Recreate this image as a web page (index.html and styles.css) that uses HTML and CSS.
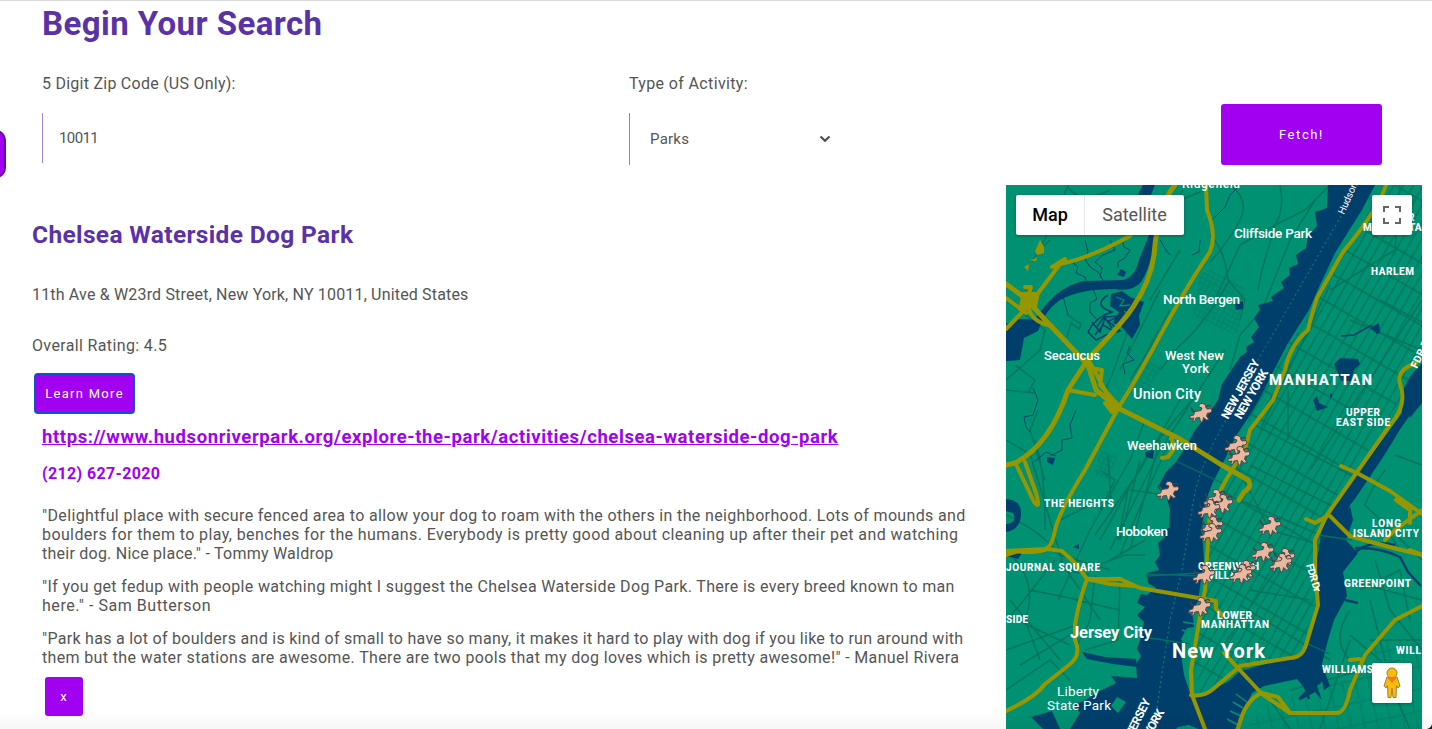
FILE: index.html
```html
<!DOCTYPE html>
<html lang="en">
<head>
<meta charset="utf-8">
<title>Begin Your Search</title>
<link rel="stylesheet" href="styles.css">
</head>
<body>
<div class="side-tab"></div>
<main class="page">
  <h1 class="title"><span>Begin Your Search</span></h1>
  <form class="search">
    <div class="field">
      <label class="label" for="zip"><span class="t-zip">5 Digit Zip Code (US Only):</span></label>
      <input class="zip" id="zip" value="10011">
    </div>
    <div class="field field-activity">
      <label class="label"><span class="t-type">Type of Activity:</span></label>
      <div class="select"><span>Parks</span>
        <svg width="12" height="8" viewBox="0 0 12 8"><path d="M1.5 1.5 6 5.8 10.5 1.5" fill="none" stroke="#4a4a4a" stroke-width="2"/></svg>
      </div>
    </div>
    <button class="btn fetch" type="button">Fetch!</button>
  </form>
  <div class="results">
    <section class="place">
      <h2 class="name"><span>Chelsea Waterside Dog Park</span></h2>
      <p class="line"><span class="t-addr">11th Ave &amp; W23rd Street, New York, NY 10011, United States</span></p>
      <p class="line"><span class="t-rate">Overall Rating: 4.5</span></p>
      <button class="btn more" type="button">Learn More</button>
      <div class="details">
        <a class="link" href="#">https://www.hudsonriverpark.org/explore-the-park/activities/chelsea-waterside-dog-park</a>
        <div class="phone">(212) 627-2020</div>
        <p class="review"><span class="r1">"Delightful place with secure fenced area to allow your dog to roam with the others in the neighborhood. Lots of mounds and</span><br><span class="r2">boulders for them to play, benches for the humans. Everybody is pretty good about cleaning up after their pet and watching</span><br><span class="r3">their dog. Nice place." - Tommy Waldrop</span></p>
        <p class="review"><span class="r4">"If you get fedup with people watching might I suggest the Chelsea Waterside Dog Park. There is every breed known to man</span><br><span class="r5">here." - Sam Butterson</span></p>
        <p class="review"><span class="r6">"Park has a lot of boulders and is kind of small to have so many, it makes it hard to play with dog if you like to run around with</span><br><span class="r7">them but the water stations are awesome. There are two pools that my dog loves which is pretty awesome!" - Manuel Rivera</span></p>
        <button class="btn close" type="button">x</button>
      </div>
    </section>
    <div class="map">
      <svg class="map-canvas" width="416" height="544" viewBox="1006 185 416 544">
        <defs>
          <pattern id="grid" width="8.6" height="27" patternUnits="userSpaceOnUse" patternTransform="rotate(30)">
            <path d="M1 0V27M0 3H8.6" stroke="#00755c" stroke-width="1.3" fill="none"/>
          </pattern>
          <pattern id="fine" width="5" height="5" patternUnits="userSpaceOnUse" patternTransform="rotate(28)">
            <path d="M1 0V5M0 1H5" stroke="#007a60" stroke-width=".6" fill="none"/>
          </pattern>
          <pattern id="loose" width="13" height="22" patternUnits="userSpaceOnUse" patternTransform="rotate(-12)">
            <path d="M1 0V22M0 1H13" stroke="#00775e" stroke-width="1" fill="none"/>
          </pattern>
          <g id="dog" stroke-linejoin="round" stroke-linecap="round">
            <path d="M-9.500-5Q-9-1-5-1" fill="none" stroke="#43404c" stroke-width="1.600"/>
            <path d="M-6-1.500 0-2.500 1-5-2-6Q-3-9 0-9.500 4-10 5-6L6-4 10-4.500 11-2 9 0 6.500 0 5.500 3 8 6.500 5.500 7 2.500 4.500 1.500 9-.5 9-1.500 4.500-5 5-6 8-8.500 8.500-7 5-11 5.500-11 3-7.500 2z" fill="#eab79f" stroke="#54454d" stroke-width="1"/>
            <path d="M5-6Q8-9 9.500-6.500" fill="none" stroke="#43404c" stroke-width="1.300"/>
          </g>
        </defs>
        <rect x="1006" y="185" width="416" height="544" fill="#009072"/>

        <!-- street grids -->
        <path d="M1384 185H1422V350L1400 400 1352 475 1326 510 1316 590 1306 640 1298 656 1240 672 1200 692 1192 650 1204 590 1212 520 1240 450 1262 370 1300 330 1330 280z" fill="url(#grid)"/>
        <path d="M1210 270 1245 288 1238 335 1192 318 1200 275z" fill="url(#fine)"/>
        <path d="M1143 362 1162 365 1145 400 1128 395z" fill="url(#fine)"/>
        <path d="M1100 450 1118 455 1108 480 1094 475z" fill="url(#fine)"/>
        <path d="M1345 680 1370 640 1422 640V729H1245L1270 700z" fill="url(#loose)" opacity=".8"/>
        <g fill="none" stroke="#00765c" stroke-width="1.500">
          <path d="M1068 185Q1052 230 1032 262M1006 300 1045 330 1040 350 1006 380M1006 390 1035 393M1015 365 1035 380 1028 393M1066 314 1081 324 1079 329 1071 323 1067 337"/>
          <path d="M1110 190Q1080 205 1068 187M1183 190 1150 250 1150 270 1110 380 1105 390M1180 300 1130 380M1160 290 1120 370M1170 310 1150 345M1180 250 1150 300"/>
          <path d="M1330 185 1305 210 1275 225 1262 270 1258 290M1315 200 1290 240 1262 310 1240 335 1230 370M1280 185Q1285 210 1275 225L1240 245 1215 300M1210 235Q1225 250 1228 280L1245 300 1240 320"/>
          <path d="M1205 190 1180 200M1230 185Q1250 200 1240 220T1210 262M1230 280Q1200 330 1180 345L1160 370M1225 350 1160 450 1110 550M1200 390 1150 450 1100 540M1180 400 1140 470 1095 535M1170 440 1130 530 1120 555"/>
          <path d="M1145 420 1130 460 1090 530 1058 600M1108 455 1111 500M1100 470 1115 480 1100 510M1130 490 1165 495M1128 490 1118 540M1140 460 1120 540M1160 440 1130 550"/>
          <path d="M1035 440Q1045 470 1045 530M1006 440 1030 454 1065 570 1090 575M1045 480 1030 430 1038 410M1090 505 1060 520M1006 515Q1040 530 1060 555L1110 570"/>
          <path d="M1006 550Q1040 580 1025 620L1040 660M1055 560 1020 605 1006 620M1030 590 1080 600M1006 650 1076 625M1006 615 1070 645M1020 665 1078 630M1010 600 1060 660M1060 560 1100 620M1095 575 1090 620 1075 650M1120 580 1118 640 1085 650M1075 600 1120 610M1110 560 1145 540M1085 570 1125 555 1145 555M1006 690 1050 660 1070 680"/>
          <path d="M1400 185 1395 250 1330 290M1330 285 1260 430M1422 300 1310 470M1380 300 1422 322M1350 320 1422 350M1288 390 1288 440M1250 465 1340 510M1255 425 1370 485M1240 500 1320 535M1228 450 1270 530 1320 545M1290 550 1220 650M1250 590 1310 600M1240 605 1330 660"/>
          <path d="M1385 470Q1370 490 1365 505L1422 560M1395 455 1422 465M1375 560 1390 610 1422 650M1360 590 1400 570 1410 620M1350 610Q1330 640 1350 660M1370 640 1422 640M1370 600 1390 680M1347 580 1422 600"/>
          <path d="M1350 635 1380 660 1410 729M1290 690 1400 660M1320 729 1350 640M1400 550 1380 520M1270 700 1290 729"/>
        </g>

        <!-- rivers, bays and ponds -->
        <g fill="#003f6b">
          <path d="M1328 185 1327 208 1315 212 1317 226 1308 236 1306 248 1296 255 1298 264 1289 268 1290 275 1281 282 1284 288 1271 297 1273 301 1258 305 1260 310 1254 318 1259 327 1251 337 1254 342 1246 347 1247 352 1240 357 1222 384 1218 400 1210 412 1195 430 1188 443 1176 462 1166 472 1159 485 1166 494 1170 510 1169 528 1162 531 1165 537 1158 543 1160 555 1155 562 1159 570 1147 573 1148 583 1156 588 1147 595 1141 594 1137 603 1145 607 1137 615 1144 622 1140 640 1137 649 1141 656 1136 664 1137 678 1111 676 1116 683 1096 693 1084 701 1074 704 1080 713 1075 721 1070 729H1235L1246 706 1252 693 1264 686 1297 679 1306 690 1299 701 1315 692 1322 700 1317 686 1322 681 1324 690 1330 686 1322 664 1328 640 1334 620 1347 596 1343 572 1358 553 1346 540 1353 520 1350 505 1369 484 1385 456 1400 430 1422 403V363L1411 375 1403 390 1402 413 1386 435 1364 464 1354 476 1332 507 1322 528 1317 560 1317 600 1306 645 1299 656 1262 665 1240 671 1229 681 1201 696 1190 693 1184 675 1182 661 1184 645 1181 639 1187 628 1194 627 1192 611 1198 601 1201 580 1204 560 1202 530 1205 503 1213 482 1223 463 1236 436 1248 418 1259 400 1274 370 1288 343 1309 310 1320 285 1335 253 1348 232 1362 210 1375 185z"/>
          <path d="M1006 324Q1018 317 1034 320L1045 306Q1060 287 1083 281L1123 280Q1135 277 1139 260L1149 235H1155Q1152 265 1141 282 1133 292 1114 289 1080 289 1060 300 1045 310 1038 331L1024 338 1020 360 1006 361z"/>
          <path d="M1143 185 1138 194 1147 205 1155 185zM1111 294 1122 291 1130 297 1144 302 1139 316 1140 325 1132 339 1121 326 1113 323 1119 312 1110 306zM1117 275 1121 269 1126 272 1124 277z"/>
          <path d="M1006 499Q1022 500 1021 515T1006 532V524Q1018 523 1013 513L1006 511zM1006 556 1022 553 1018 559zM1031 717 1052 711 1060 729H1043zM1082 652 1105 657 1136 659 1137 667 1113 664 1087 659z"/>
          <path d="M1334 364 1340 358 1358 359 1360 364 1354 370 1351 381H1341zM1370 328 1379 323 1380 333 1377 334zM1313 400 1317 396 1319 403 1328 407 1317 411zM1330 393 1333 395 1330 399zM1047 457 1055 458 1053 465 1047 462zM1145 452 1154 450 1153 459 1146 457zM1073 547 1079 544 1079 549zM1235 304 1243 301 1243 309 1236 310z"/>
        </g>
        <g fill="#009072">
          <path d="M1348 509Q1370 477 1385 454L1401 428 1410 415 1408 427 1390 455 1368 493zM1407 425 1412 418 1412 428 1404 438z"/>
          <path d="M1111 706 1117 697 1126 702 1118 713zM1178 727 1189 725 1198 729H1176z"/>
        </g>
        <g fill="none" stroke="#009072" stroke-width="1.500">
          <path d="M1236 694 1247 702M1233 702 1243 708M1230 711 1241 716M1227 719 1238 725M1188 612 1198 616M1183 622 1195 624M1182 630 1192 633"/>
        </g>
        <g fill="none" stroke="#003f6b" stroke-width=".9">
          <path d="M1122 239 1124 247 1130 250 1125 258 1118 262V268M1085 240 1088 252 1085 259 1090 267 1098 272 1105 283M1072 262 1078 267 1076 273 1085 277 1087 286M1110 240 1115 250 1103 255 1095 262 1102 268 1100 278M1050 240 1044 246M1093 289 1097 299 1090 303V312L1097 320M1063 296 1068 315M1160 240 1166 250 1170 255M1165 195 1155 220M1160 210 1170 212 1178 208M1200 240 1199 252 1192 255M1240 185 1230 195 1225 207 1212 220M1130 345 1127 353 1134 360 1123 364 1125 374M1033 388 1038 400 1033 415 1024 417 1026 427 1030 432M1076 410 1070 425 1072 438 1062 440V450L1050 456M1034 462 1046 452 1056 456"/>
          <path d="M1088 332Q1095 317 1112 312 1092 305 1108 295M1088 332 1096 340 1106 335 1120 331 1108 321 1121 316 1104 317 1096 328M1095 335 1103 325 1115 332M1092 322 1100 332 1105 318 1112 328M1341 336 1354 335 1372 325" stroke-width="1.500"/>
          <path d="M1355 548Q1380 547 1400 557L1408 572 1421 586M1345 600 1358 603M1355 552Q1370 540 1395 545" stroke-width="2.500"/>
        </g>
        <g stroke="#009072" stroke-width="1.300" fill="none"><path d="M1116 297 1124 300 1120 306 1130 305M1124 311 1130 315 1125 320"/></g>
        <g stroke="#003f6b" stroke-width="2.400" fill="none"><path d="M1301 675 1309 699M1310 670 1320 684M1305 694 1317 680M1299 699 1313 686M1277 680 1270 683"/></g>
        <g fill="none" stroke="#0a8a7c" stroke-width="1" stroke-dasharray="2 3">
          <path d="M1341 216 1255 365 1215 440Q1195 480 1192 510L1182 570 1170 620 1161 680 1154 729"/>
        </g>
        <g fill="none" stroke="#00705f" stroke-width="1.300"><path d="M1176 461 1222 483M1147 574 1202 576M1145 576 1200 573M1150 638 1190 644M1318 535 1352 540M1306 643 1330 654" /></g>

        <!-- highways -->
        <g fill="none" stroke="#969600" stroke-width="4" stroke-linejoin="round" stroke-linecap="round">
          <path d="M1175 185Q1158 205 1154 255C1148 300 1115 330 1088 359L1068 390Q1050 445 1015 463L1006 465" stroke-width="5"/>
          <path d="M1206 185 1207 210Q1217 235 1210 252C1170 310 1150 360 1120 405L1085 470Q1060 510 1055 530 1052 548 1044 549L1006 551"/>
          <path d="M1006 284 1025 298 1048 323 1088 365 1096 390 1118 408 1180 439 1220 464 1248 480Q1253 486 1244 492L1239 500" stroke-width="5"/>
          <path d="M1006 329 1030 304 1060 264Q1090 258 1130 236M1025 287 1031 287 1026 304M1028 305Q1030 322 1052 326M1006 298 1026 313M1052 267 1065 259" />
          <path d="M1088 359 1105 390 1112 408M1068 390 1095 395M1090 368 1102 370 1100 385 1120 407 1112 412 1105 403M1016 464 1034 502Q1041 511 1036 493L1025 462"/>
          <path d="M1171 438 1175 447 1168 457 1162 458M1048 549 1062 551 1075 563 1087 579M1048 549Q1030 554 1018 551L1006 555"/>
          <path d="M1087 579 1120 579 1140 588 1175 594 1216 601V609L1222 615M1087 579 1110 584 1135 586M1087 579Q1079 600 1075 625V640Q1082 655 1069 665L1045 684Q1036 697 1006 711"/>
          <path d="M1386 185Q1378 210 1343 252L1317 298Q1310 320 1308 330 1290 345 1285 370L1273 400 1250 430 1245 449 1226 480 1210 510 1205 590 1201 610 1191 670 1192 695 1205 729"/>
          <path d="M1416 363Q1396 370 1400 384 1408 405 1390 425L1355 475 1327 515 1315 540V570L1318 605 1306 645Q1302 658 1290 658L1240 666 1212 690Q1203 697 1191 695"/>
          <path d="M1341 466 1357 473 1390 491 1422 514M1330 516 1350 536Q1380 545 1422 555M1422 510 1395 530 1385 540M1396 500 1410 510 1410 523M1396 500 1404 506M1327 516 1315 523 1306 519"/>
          <path d="M1224 653 1262 694 1290 713H1338Q1346 711 1350 690L1365 655 1395 620 1422 606M1238 729Q1245 699 1262 693L1278 697 1290 713M1350 660 1360 659M1410 550 1422 555"/>
        </g>
        <path d="M1022 292H1040L1037 307 1018 311zM1040 240 1044 247 1044 253 1037 255 1035 251zM1030 261 1037 257 1036 261zM1024 267 1029 264 1028 271z" fill="#969600"/>

        <!-- place labels -->
        <g class="lbl">
          <text x="1182" y="188" textLength="58" font-size="12">Ridgefield</text>
          <text x="1234" y="238" textLength="78" font-size="13.500">Cliffside Park</text>
          <text x="1163" y="304" textLength="77" font-size="13.500">North Bergen</text>
          <text x="1044" y="360" textLength="56" font-size="13">Secaucus</text>
          <text x="1165" y="360" textLength="59" font-size="13">West New</text>
          <text x="1182" y="373" textLength="27" font-size="13">York</text>
          <text x="1133" y="399" textLength="68" font-size="14.500">Union City</text>
          <text x="1127" y="450" textLength="70" font-size="13">Weehawken</text>
          <text x="1116" y="536" textLength="52" font-size="13.500">Hoboken</text>
          <text x="1070" y="638" textLength="82" font-size="16.500" class="b">Jersey City</text>
          <text x="1172" y="658" textLength="93" font-size="20" class="b">New York</text>
        </g>
        <g class="lbl cap">
          <text x="1269" y="385" textLength="103" font-size="15">MANHATTAN</text>
          <text x="1371" y="274.500" textLength="43">HARLEM</text>
          <text x="1363" y="230.500" textLength="8">M</text>
          <text x="1409" y="230.500">TA</text>
          <text x="1408" y="221">R</text>
          <text x="1346" y="415.500" textLength="34">UPPER</text>
          <text x="1336" y="425.500" textLength="54">EAST SIDE</text>
          <text x="1044" y="506.500" textLength="70">THE HEIGHTS</text>
          <text x="1372" y="526.500" textLength="29">LONG</text>
          <text x="1353" y="536.500" textLength="66">ISLAND CITY</text>
          <text x="1006" y="570.500" textLength="94">JOURNAL SQUARE</text>
          <text x="1198" y="569.500" textLength="61">GREENWICH</text>
          <text x="1208" y="578.500" textLength="41">VILLAGE</text>
          <text x="1344" y="586.500" textLength="67">GREENPOINT</text>
          <text x="1217" y="618.500" textLength="35">LOWER</text>
          <text x="1201" y="627.500" textLength="68">MANHATTAN</text>
          <text x="1006" y="622.500" textLength="22">SIDE</text>
          <text x="1396" y="653.500" textLength="25">WILL</text>
          <text x="1322" y="672.500" textLength="51">WILLIAMS</text>
        </g>
        <g class="lbl thin">
          <text x="1057" y="696" textLength="42" font-size="13.500">Liberty</text>
          <text x="1047" y="710" textLength="64" font-size="13.500">State Park</text>
          <text transform="translate(1344 215) rotate(-66)" font-size="10" textLength="34">Hudson</text>
        </g>
        <g class="lbl b" font-size="12">
          <text transform="translate(1228 420) rotate(-61)" textLength="66">NEW JERSEY</text>
          <text transform="translate(1241 420) rotate(-60)" textLength="55">NEW YORK</text>
          <text transform="translate(1121 760) rotate(-63)" textLength="66">NEW JERSEY</text>
          <text transform="translate(1138 758) rotate(-60)" textLength="53">NEW YORK</text>
          <text transform="translate(1417 369) rotate(-65)" font-size="10.500" textLength="34">FDR Dr</text>
          <text transform="translate(1306 565) rotate(73)" font-size="10.500" textLength="29">FDR Dr</text>
        </g>

        <g>
          <use href="#dog" x="1201" y="413"/><use href="#dog" x="1236" y="445"/><use href="#dog" x="1239" y="456"/>
          <use href="#dog" x="1168" y="491"/><use href="#dog" x="1215" y="499"/><use href="#dog" x="1222" y="504"/><use href="#dog" x="1209" y="509"/>
          <use href="#dog" x="1212" y="526"/><use href="#dog" x="1211" y="533"/><use href="#dog" x="1270" y="526"/><use href="#dog" x="1263" y="552"/>
          <use href="#dog" x="1284" y="558"/><use href="#dog" x="1281" y="563"/><use href="#dog" x="1245" y="570"/><use href="#dog" x="1241" y="574"/>
          <use href="#dog" x="1204" y="575"/><use href="#dog" x="1200" y="607"/>
        </g>
      </svg>
      <div class="map-type"><span class="on">Map</span><span class="off">Satellite</span></div>
      <div class="ctl full"><svg width="18" height="18" viewBox="0 0 18 18"><path d="M1 6V1H6M12 1H17V6M17 12V17H12M6 17H1V12" fill="none" stroke="#666" stroke-width="2"/></svg></div>
      <div class="ctl peg"><svg width="18" height="32" viewBox="0 0 18 32"><path d="M4 10H14L17 19 15 21 13.500 18.500 13 30.500H10L9 21 8 30.500H5L4.500 18.500 3 21 1 19z" fill="#fbbc04" stroke="#a08040" stroke-width="1"/><circle cx="9" cy="6" r="5" fill="#fbbc04" stroke="#a08040"/><path d="M4.500 11H13.500L9 16z" fill="#f07b24"/></svg></div>
    </div>
  </div>
</main>
<div class="shade"></div>
<svg class="corner" width="5" height="5" viewBox="0 0 5 5"><path d="M5 0V5H0Q4 4 5 0z" fill="#2a1a26"/></svg>
</body>
</html>
```
FILE: styles.css
```css
* { box-sizing: border-box; }
body { margin: 0; width: 1432px; height: 729px; overflow: hidden; background: #fff; color: #555; font-family: Roboto, sans-serif; font-size: 16px; }
.page { border-top: 1px solid #d9dade; height: 729px; overflow: hidden; display: flex; flex-direction: column; }
.title, .name { margin: 0; color: #5a32a8; font-weight: 700; white-space: nowrap; }
.title { padding-left: 42px; height: 72px; line-height: 45px; font-size: 33px; letter-spacing: .43px; }
.search { height: 112px; display: grid; grid-template-columns: 587px 592px 161px; padding-left: 42px; }
.label { display: block; height: 40px; line-height: 22px; }
.t-zip { letter-spacing: .25px; }
.t-type { letter-spacing: .36px; }
.zip { display: block; width: 320px; height: 50px; border: 0; border-left: 1px solid #9c86e0; padding: 0 0 0 16px; font: 15px Roboto, sans-serif; color: #555; background: transparent; letter-spacing: -.6px; outline: 0; }
.select { width: 220px; height: 52px; border-left: 1px solid #8f84cc; display: flex; align-items: center; justify-content: space-between; padding: 0 18px 0 20px; font-size: 15px; letter-spacing: .25px; }
.btn { border: 0; background: #a200f0; color: #fff; font: 13px Roboto, sans-serif; letter-spacing: 1.3px; border-radius: 3px; padding: 0; display: block; }
.fetch { width: 161px; height: 61px; margin-top: 31px; letter-spacing: 1.6px; }
.results { display: flex; justify-content: space-between; padding: 0 10px 0 32px; height: 544px; }
.place { width: 960px; white-space: nowrap; }
.name { height: 100px; padding-top: 35px; line-height: 30px; font-size: 24.5px; letter-spacing: .36px; }
.line { margin: 0 0 31px; line-height: 20px; }
.line + .line { margin-bottom: 17px; }
.t-addr { letter-spacing: .17px; }
.t-rate { letter-spacing: .36px; }
.more { width: 101px; height: 41px; margin-left: 2px; border: 2px solid #0a56c8; border-radius: 4px; }
.details { padding: 12px 0 0 10px; display: flex; flex-direction: column; align-items: flex-start; }
.link, .phone { color: #a200f0; font-weight: 700; }
.link { font-size: 18.5px; line-height: 22px; letter-spacing: .59px; }
.phone { margin-top: 16px; line-height: 20px; margin-bottom: 22px; letter-spacing: .36px; }
.review { margin: 0 0 14px; line-height: 19px; }
.r1 { letter-spacing: .355px; }
.r2 { letter-spacing: .395px; }
.r3 { letter-spacing: .24px; }
.r4 { letter-spacing: .345px; }
.r5 { letter-spacing: .55px; }
.r6 { letter-spacing: .285px; }
.r7 { letter-spacing: .35px; }
.close { width: 38px; height: 39px; margin: -4px 0 0 3px; }
.map { position: relative; width: 416px; height: 544px; overflow: hidden; }
.map-canvas { display: block; }
.lbl { fill: #fff; font-family: Roboto, sans-serif; font-weight: 500; }
.cap { font-size: 10px; font-weight: 800; }
.b { font-weight: 700; }
.thin { font-weight: 400; }
.map-type { position: absolute; left: 10px; top: 10px; height: 40px; display: flex; background: #fff; border-radius: 2px; box-shadow: 0 1px 3px rgba(0,0,0,.3); font-size: 18px; line-height: 40px; text-align: center; }
.on { width: 69px; color: #000; font-weight: 500; border-right: 1px solid #e6e6e6; }
.off { width: 99px; color: #565656; }
.ctl { position: absolute; right: 10px; width: 40px; height: 40px; background: #fff; border-radius: 2px; display: flex; align-items: center; justify-content: center; box-shadow: 0 1px 3px rgba(0,0,0,.3); }
.full { top: 10px; }
.peg { bottom: 26px; }
.side-tab { position: absolute; left: -30px; top: 130px; width: 36px; height: 48px; background: #a200f0; border: 2px solid #6a0aa0; border-radius: 10px; }
.shade { position: absolute; left: 0; bottom: 0; width: 1432px; height: 18px; background: linear-gradient(rgba(0,0,0,0), rgba(0,0,0,.035)); }
.corner { position: absolute; right: 0; bottom: 0; }
```
